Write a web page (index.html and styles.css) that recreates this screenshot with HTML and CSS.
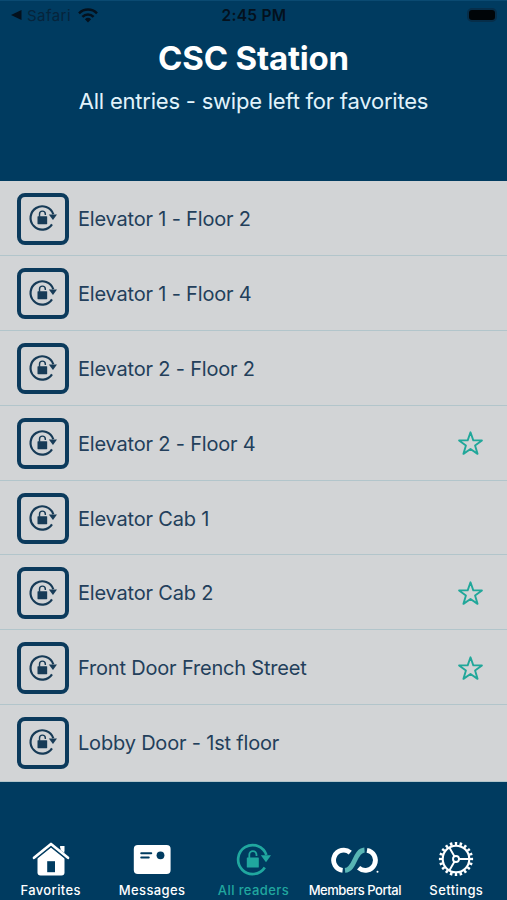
FILE: index.html
```html
<!DOCTYPE html>
<html lang="en">
<head>
<meta charset="utf-8">
<title>CSC Station</title>
<link rel="stylesheet" href="styles.css">
</head>
<body>
<svg class="defs" width="0" height="0" aria-hidden="true">
  <symbol id="reader" viewBox="0 0 36 36">
    <path d="M31.400 14A14.500 14.500 0 1 0 29.800 26.500" fill="none" stroke="currentColor" stroke-width="2.700"/>
    <path d="M25.800 14.200H36L31 21.200Z" fill="currentColor"/>
    <rect x="11.800" y="16.500" width="12" height="10" rx=".6" fill="currentColor"/>
    <path d="M14.300 17V13.700a3.600 3.600 0 0 1 7.200 0v1.200" fill="none" stroke="currentColor" stroke-width="1.800"/>
  </symbol>
  <symbol id="star" viewBox="0 0 26 26">
    <path d="M13 2.200 15.700 10H24L17.400 14.900 19.800 23 13 18.200 6.200 23 8.600 14.900 2 10H10.300Z" fill="none" stroke="currentColor" stroke-width="1.800" stroke-linejoin="round"/>
  </symbol>
</svg>
<div class="screen">
  <header class="header">
    <div class="status">
      <div class="status-left">
        <svg class="back" width="11" height="10" viewBox="0 0 11 10"><path d="M0 5 10.500 0V10Z"/></svg>
        <span class="carrier">Safari</span>
        <svg class="wifi" width="20" height="15" viewBox="0 0 20 15"><g fill="none" stroke="currentColor" stroke-width="2.500"><path d="M1 5.300a12.800 12.800 0 0 1 18 0"/><path d="M4.400 8.800a8 8 0 0 1 11.200 0"/></g><path d="M6.900 11.300a4.500 4.500 0 0 1 6.200 0L10 14.500Z"/></svg>
      </div>
      <span class="time">2:45 PM</span>
      <div class="status-right"><span class="battery"></span></div>
    </div>
    <h1 class="title">CSC Station</h1>
    <p class="subtitle">All entries - swipe left for favorites</p>
  </header>
  <ul class="list">
    <li class="row"><span class="box"><svg class="lock"><use href="#reader"/></svg></span><span class="name">Elevator 1 - Floor 2</span></li>
    <li class="row"><span class="box"><svg class="lock"><use href="#reader"/></svg></span><span class="name">Elevator 1 - Floor 4</span></li>
    <li class="row"><span class="box"><svg class="lock"><use href="#reader"/></svg></span><span class="name">Elevator 2 - Floor 2</span></li>
    <li class="row"><span class="box"><svg class="lock"><use href="#reader"/></svg></span><span class="name">Elevator 2 - Floor 4</span><svg class="star"><use href="#star"/></svg></li>
    <li class="row"><span class="box"><svg class="lock"><use href="#reader"/></svg></span><span class="name">Elevator Cab 1</span></li>
    <li class="row"><span class="box"><svg class="lock"><use href="#reader"/></svg></span><span class="name">Elevator Cab 2</span><svg class="star"><use href="#star"/></svg></li>
    <li class="row"><span class="box"><svg class="lock"><use href="#reader"/></svg></span><span class="name">Front Door French Street</span><svg class="star"><use href="#star"/></svg></li>
    <li class="row"><span class="box"><svg class="lock"><use href="#reader"/></svg></span><span class="name">Lobby Door - 1st floor</span></li>
  </ul>
  <nav class="tabs">
    <a class="tab">
      <svg width="38" height="36" viewBox="0 0 38 36"><path d="M19 5.800 32.500 16.700V31.500Q32.500 34.500 29.500 34.500H8.500Q5.500 34.500 5.500 31.500V16.700Z" fill="currentColor"/><path d="M28.200 5H32.300V14L28.200 10.700Z" fill="currentColor"/><path d="M1.800 16.800 19 3 36.200 16.800" fill="none" stroke="#003b60" stroke-width="5.600"/><path d="M2 16.800 19 3 36 16.800" fill="none" stroke="currentColor" stroke-width="2.700" stroke-linecap="round" stroke-linejoin="round"/><path d="M28.500 5H32.300V12L28.500 9Z" fill="currentColor"/><rect x="15.200" y="20.200" width="7.800" height="11" fill="#003b60"/></svg>
      <span class="label">Favorites</span>
    </a>
    <a class="tab">
      <svg width="38" height="36" viewBox="0 0 38 36"><rect x=".8" y="4" width="36.800" height="29" rx="4" fill="currentColor"/><g stroke="#003b60" stroke-width="1.900" stroke-linecap="round"><path d="M8.200 12.300H18.300M8.200 16.500H15.800"/></g><circle cx="27.500" cy="14.300" r="3.900" fill="#003b60"/></svg>
      <span class="label">Messages</span>
    </a>
    <a class="tab active">
      <svg width="36" height="36"><use href="#reader"/></svg>
      <span class="label">All readers</span>
    </a>
    <a class="tab">
      <svg width="50" height="36" viewBox="0 0 50 36"><g fill="none" stroke-width="4.800"><path d="M20.300 11.600A10.100 10.100 0 1 0 12.600 29.300" stroke="currentColor"/><path d="M28.600 26.800A10.100 10.100 0 1 0 37 9.300" stroke="currentColor"/><path d="M15 29.400C25.500 28.500 24 9.800 34.500 9" stroke="#003b60" stroke-width="7"/><path d="M15 29.400C25.500 28.500 24 9.800 34.500 9" stroke="#58b5b4"/></g><circle cx="47.500" cy="30.800" r="1" fill="currentColor"/></svg>
      <span class="label members">Members Portal</span>
    </a>
    <a class="tab">
      <svg width="36" height="36" viewBox="0 0 36 36"><g fill="none" stroke="currentColor"><circle cx="18" cy="18" r="13.300" stroke-width="2.100"/><circle cx="18" cy="18" r="15.500" stroke-width="3.200" pathLength="80" stroke-dasharray="2 2" stroke-dashoffset="1"/><circle cx="18" cy="18" r="3" stroke-width="1.900"/><path d="M21 18H31M16.500 15.400 11.500 6.800M16.500 20.600 11.500 29.200" stroke-width="1.900"/></g></svg>
      <span class="label">Settings</span>
    </a>
  </nav>
</div>
</body>
</html>
```
FILE: styles.css
```css
* { box-sizing: border-box; }
body {
  margin: 0;
  font-family: Inter, "Liberation Sans", sans-serif;
  background: #003b60;
}
.defs { display: block; }
.screen {
  display: flex;
  flex-direction: column;
  width: 507px;
  height: 900px;
  overflow: hidden;
  border-top: 1px solid #0a4a72;
}
.header {
  height: 180px;
  text-align: center;
  color: #fff;
}
.status {
  display: grid;
  grid-template-columns: 1fr auto 1fr;
  align-items: center;
  height: 28px;
  padding: 0 10px 0 11px;
  color: #04111d;
  fill: currentColor;
}
.status-left { display: flex; align-items: center; }
.carrier {
  margin-left: 5px;
  font-size: 15px;
  letter-spacing: .45px;
  color: #06243b;
}
.wifi { margin-left: 7px; }
.time { font-size: 15.5px; font-weight: 600; letter-spacing: .3px; }
.status-right { display: flex; justify-content: flex-end; }
.battery {
  width: 30px;
  height: 14px;
  border: 2px solid #062e4a;
  border-radius: 5px;
  background: #000508;
}
.title {
  margin: 8px 0 0;
  font-size: 33px;
  line-height: 42px;
  font-weight: 700;
  letter-spacing: -.2px;
}
.subtitle {
  margin: 8px 0 0;
  font-size: 22px;
  line-height: 28px;
  letter-spacing: -.22px;
  color: #e2f3fb;
}
.list {
  display: grid;
  grid-template-rows: repeat(7, 74.9px) 1fr;
  height: 601px;
  margin: 0;
  padding: 0;
  list-style: none;
  background: #d2d4d6;
}
.row {
  display: flex;
  align-items: flex-start;
  padding: 12px 23px 0 16.5px;
  border-bottom: 1.5px solid #b2c5cb;
}
.box {
  display: flex;
  align-items: center;
  justify-content: center;
  width: 52px;
  height: 51.5px;
  border: 4px solid #0b3a5c;
  border-radius: 8px;
}
.lock { width: 29px; height: 29px; margin-top: -2px; color: #173b57; }
.name {
  margin-left: 9.5px;
  font-size: 20px;
  line-height: 53px;
  letter-spacing: -.19px;
  color: #233f5b;
}
.star {
  width: 27px;
  height: 27px;
  margin: 12.5px 0 0 auto;
  color: #21a79a;
}
.tabs {
  display: grid;
  grid-template-columns: repeat(5, 1fr);
  flex: 1;
  align-items: start;
  padding-top: 59px;
  color: #fff;
}
.tab {
  display: flex;
  flex-direction: column;
  align-items: center;
  white-space: nowrap;
}
.tab.active { color: #20a79f; }
.label {
  margin-top: 4px;
  font-size: 13px;
  line-height: 18px;
  font-weight: 500;
  letter-spacing: .4px;
}
.label.members { letter-spacing: -.45px; }
```
